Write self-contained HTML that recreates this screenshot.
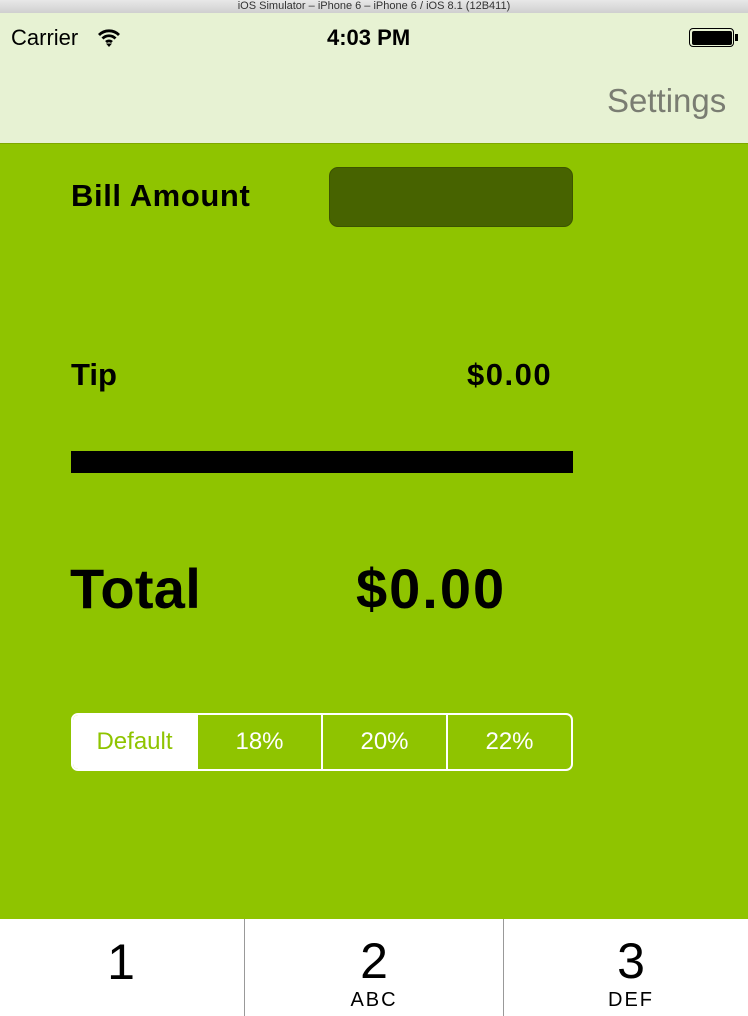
<!DOCTYPE html>
<html><head><style>
*{margin:0;padding:0;box-sizing:border-box}
body{width:748px;height:1016px;overflow:hidden;background:#8fc400;font-family:"Liberation Sans",sans-serif;position:relative}
.a{position:absolute}
</style></head><body>
<div class="a" style="left:0;top:0;width:748px;height:13px;background:linear-gradient(#e8e8e8,#cfcfcf);font-size:11px;text-align:center;line-height:12px;color:#333">iOS Simulator – iPhone 6 – iPhone 6 / iOS 8.1 (12B411)</div>
<div class="a" style="left:0;top:13px;width:748px;height:131px;background:#e7f2d3;border-bottom:1px solid #7fa800"></div>
<div class="a" style="left:11px;top:25px;font-size:22px">Carrier</div>
<svg class="a" style="left:97px;top:27px" width="24" height="20" viewBox="0 0 24 20"><path d="M2 8a14 14 0 0 1 20 0M5.5 11.5a9 9 0 0 1 13 0M9 15a4.5 4.5 0 0 1 6 0" stroke="#000" stroke-width="2.8" fill="none"/><path d="M12 20l-3-3.5h6z"/></svg>
<div class="a" style="left:327px;top:25px;font-size:22px;font-weight:bold">4:03 PM</div>
<div class="a" style="left:689px;top:28px;width:45px;height:19px;border:1.5px solid #000;border-radius:4px;padding:1.5px"><div style="width:100%;height:100%;background:#000;border-radius:2px"></div></div>
<div class="a" style="left:735px;top:34px;width:3px;height:7px;background:#000"></div>
<div class="a" style="left:607px;top:82px;font-size:33px;color:#7a7d72">Settings</div>
<div class="a" style="left:71px;top:178px;font-size:31px;font-weight:bold;letter-spacing:0.6px">Bill Amount</div>
<div class="a" style="left:329px;top:167px;width:244px;height:60px;background:#476300;border-radius:9px;border:1px solid #3c5400"></div>
<div class="a" style="left:71px;top:357px;font-size:31px;font-weight:bold">Tip</div>
<div class="a" style="left:467px;top:357px;font-size:31px;font-weight:bold;letter-spacing:1.5px">$0.00</div>
<div class="a" style="left:71px;top:451px;width:502px;height:22px;background:#000"></div>
<div class="a" style="left:70px;top:556px;font-size:56px;font-weight:bold;letter-spacing:0.3px">Total</div>
<div class="a" style="left:356px;top:556px;font-size:56px;font-weight:bold;letter-spacing:2px">$0.00</div>
<div class="a" style="left:71px;top:713px;width:502px;height:58px;border:2px solid #fff;border-radius:7px;display:flex;overflow:hidden;font-size:24px;color:#fff">
<div style="flex:1;background:#fff;color:#8fc400;display:flex;align-items:center;justify-content:center">Default</div>
<div style="flex:1;display:flex;align-items:center;justify-content:center;border-left:2px solid #fff">18%</div>
<div style="flex:1;display:flex;align-items:center;justify-content:center;border-left:2px solid #fff">20%</div>
<div style="flex:1;display:flex;align-items:center;justify-content:center;border-left:2px solid #fff">22%</div>
</div>
<div class="a" style="left:0;top:919px;width:748px;height:97px;background:#fff;display:flex">
<div style="width:245px;border-right:1px solid #999;text-align:center;font-size:50px;padding-top:14px;padding-right:2px">1</div>
<div style="width:259px;border-right:1px solid #999;text-align:center;font-size:50px;padding-top:14px;line-height:56px">2<div style="font-size:20px;letter-spacing:2px;line-height:22px">ABC</div></div>
<div style="flex:1;text-align:center;font-size:50px;padding-top:14px;line-height:56px;padding-left:10px">3<div style="font-size:20px;letter-spacing:2px;line-height:22px">DEF</div></div>
</div>
</body></html>
